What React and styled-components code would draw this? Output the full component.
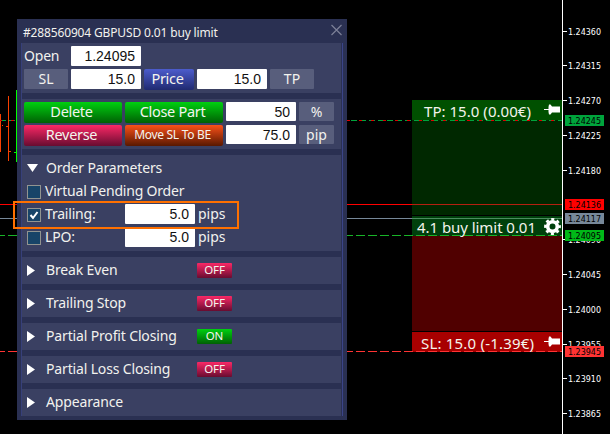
import React, { useState } from 'react';
import styled, { createGlobalStyle } from 'styled-components';

const GlobalStyle = createGlobalStyle`
  * {
    box-sizing: border-box;
  }

  body {
    margin: 0;
    background: #000;
    overflow: hidden;
  }

  button {
    border: 0;
    padding: 0;
  }
`;

const Terminal = styled.main`
  position: relative;
  width: 610px;
  height: 434px;
  overflow: hidden;
  background: #000;
  font-family: 'Noto Sans', 'Open Sans', sans-serif;
`;

const ChartCanvas = styled.svg`
  display: block;
  width: 610px;
  height: 434px;

  .zone-label {
    font-size: 15px;
    fill: #f4f4ec;
  }

  .price {
    font-family: 'DejaVu Sans Condensed', 'DejaVu Sans', sans-serif;
    font-size: 9.5px;
    fill: #fff;
  }

  .price.tag {
    fill: #000;
  }
`;

const OrderWindow = styled.section`
  position: absolute;
  left: 17px;
  top: 19px;
  width: 330px;
  height: 401px;
  background: #2a3052;
  color: #f2f2ee;
`;

const TitleBar = styled.header`
  height: 24px;
  display: flex;
  justify-content: space-between;
  padding: 5px 5px 0 6px;
  font-size: 12px;
  line-height: 18px;
  letter-spacing: -0.15px;
  white-space: nowrap;
`;

const WindowBody = styled.div`
  height: 373px;
  margin: 0 4px;
  padding-right: 1px;
  border-left: 1px solid #37407a;
  border-right: 1px solid #3a4488;
  display: flex;
  flex-direction: column;
  gap: 6px;
`;

const Block = styled.section`
  flex: none;
  height: ${({ $height }) => $height}px;
  padding: 3px 0 0 2px;
  background: #3a4062;
  display: flex;
  flex-direction: column;
  gap: ${({ $gap }) => $gap || 0}px;
`;

const Row = styled.div`
  height: 20px;
  display: flex;
  gap: 3px;
  align-items: flex-start;
`;

const OpenLabel = styled.span`
  width: 44px;
  font-size: 14px;
  line-height: 20px;
  letter-spacing: -0.2px;
`;

const NumberField = styled.input`
  flex: none;
  width: 70px;
  height: ${({ $height }) => $height || 20}px;
  padding: 0 6px 0 0;
  border: 0;
  border-radius: 1px;
  background: #fff;
  color: #111;
  font-family: 'Liberation Sans', sans-serif;
  font-size: 14px;
  text-align: right;
`;

const UnitTag = styled.span`
  width: ${({ $width }) => $width}px;
  height: ${({ $height }) => $height || 20}px;
  border-radius: 1px;
  background: #585e7c;
  font-size: 14px;
  line-height: 20px;
  text-align: center;
`;

const fills = {
  green: 'linear-gradient(#00d010, #006004)',
  pink: 'linear-gradient(#fa2866, #680c30)',
  orange: 'linear-gradient(#fa5018, #581800)',
  blue: 'linear-gradient(#4c5ccc, #202a70)',
};

const ActionButton = styled.button`
  flex: none;
  width: ${({ $width }) => $width}px;
  height: 21px;
  padding: 0 3px 2px 0;
  border-radius: 2px;
  background: ${({ $tone }) => fills[$tone]};
  color: #f4f4ee;
  font-family: inherit;
  font-size: ${({ $size }) => $size || 14.5}px;
  line-height: 19px;
  letter-spacing: -0.3px;
  white-space: nowrap;
`;

const SectionTitle = styled.h2`
  height: 20px;
  margin: 0;
  display: flex;
  align-items: center;
  font-size: 14px;
  font-weight: 400;
  letter-spacing: -0.15px;
  white-space: nowrap;

  svg {
    flex: none;
    width: 11px;
    margin: 0 8px 0 3px;
  }

  span {
    width: 151px;
    padding-bottom: 2px;
  }
`;

const OptionRow = styled.label`
  height: 20px;
  display: flex;
  align-items: center;
  font-size: 14px;
  white-space: nowrap;

  .name {
    width: 84px;
    padding: 0 0 2px 4px;
    letter-spacing: -0.2px;
  }

  .unit {
    padding: 0 0 2px 3px;
  }
`;

const CheckBox = styled.span`
  flex: none;
  width: 14px;
  height: 14px;
  margin: 2px 0 0 3px;
  border: 1px solid #929490;
  background: #184468;
  display: flex;
`;

const Toggle = styled.button`
  width: 35px;
  height: 15px;
  padding-bottom: 1px;
  border-radius: 1px;
  background: ${({ $on }) => (fills[$on ? 'green' : 'pink'])};
  color: #f4f4ee;
  font-family: inherit;
  font-size: 11.5px;
  line-height: 14px;
  letter-spacing: -0.2px;
`;

const Highlight = styled.div`
  position: absolute;
  left: 13px;
  top: 201px;
  width: 226px;
  height: 28px;
  border: 2px solid #ff7000;
  pointer-events: none;
`;

const prices = [
  ['1.24360', 31], ['1.24315', 65], ['1.24270', 100], ['1.24225', 135],
  ['1.24180', 170], ['1.24090', 239], ['1.24045', 274], ['1.24000', 309],
  ['1.23955', 344], ['1.23910', 378], ['1.23865', 413],
];

const tags = [
  ['1.24245', 120, '#00a43c'],
  ['1.24136', 204, '#ff0000'],
  ['1.24117', 218, '#778899'],
  ['1.24095', 235, '#00b818'],
  ['1.23945', 351, '#ff3333'],
];

function PushPin({ y }) {
  return (
    <path
      transform={`translate(544 ${y})`}
      fill='#fff'
      d='M0 -0.5H4.5V-2.5L5 -5H6.5L8 -3H16V3H8L6.5 5H5L4.5 2.5V0.5H0z'
    />
  );
}

function Chart() {
  return (
    <ChartCanvas viewBox='0 0 610 434' shapeRendering='crispEdges'>
      <path d='M0.5 114v38M8.5 96v65M2 125.5h1M6 126.5h3M8 151.5h3' stroke='#f84000' />
      <path d='M16.5 90v72M14 152.5h3' stroke='#00ff00' />

      <rect x='412' y='100' width='150' height='20' fill='#005000' />
      <rect x='412' y='120' width='150' height='95' fill='#002800' />
      <rect x='412' y='216' width='150' height='20' fill='#00400c' />
      <rect x='412' y='236' width='150' height='95' fill='#500000' />
      <rect x='412' y='332' width='150' height='20' fill='#a80000' />

      <path d='M0 120.5h562' stroke='#00a43c' strokeDasharray='6 3' />
      <path d='M0 120.5h562' stroke='#e00000' strokeDasharray='3 9' strokeDashoffset='-11' />
      <path d='M0 204.5h412' stroke='#ff0000' />
      <path d='M412 204.5h150' stroke='#b42010' />
      <path d='M0 218.5h412' stroke='#778899' />
      <path d='M412 218.5h150' stroke='#4c8c60' />
      <path d='M0 235.5h562' stroke='#18b428' strokeDasharray='9 3' strokeDashoffset='-8' />
      <path d='M0 351.5h562' stroke='#ff3333' strokeDasharray='9 3' strokeDashoffset='-8' />

      <g shapeRendering='auto'>
        <text className='zone-label' x='424' y='116.5' textLength='107'>TP: 15.0 (0.00€)</text>
        <text className='zone-label' x='417' y='232.5' textLength='119'>4.1 buy limit 0.01</text>
        <text className='zone-label' x='421' y='348.5' textLength='113'>SL: 15.0 (-1.39€)</text>
        <PushPin y={109.5} />
        <PushPin y={341.5} />
        <circle cx='552.5' cy='226.5' r='4.8' fill='none' stroke='#fff' strokeWidth='3.6' />
        <circle cx='552.5' cy='226.5' r='7.2' fill='none' stroke='#fff' strokeWidth='2.4' strokeDasharray='3.1 2.555' strokeDashoffset='1.55' />
      </g>

      <path d='M562.5 0v434' stroke='#fff' />
      {prices.map(([price, y]) => (
        <g key={price}>
          <path d={`M563 ${y}.5h4`} stroke='#fff' />
          <text className='price' x='568' y={y + 4} textLength='33' lengthAdjust='spacingAndGlyphs'>{price}</text>
        </g>
      ))}
      {tags.map(([price, y, color]) => (
        <g key={price}>
          <rect x='565' y={y - 5} width='39' height='11' fill={color} />
          <text className='price tag' x='568' y={y + 4} textLength='33' lengthAdjust='spacingAndGlyphs'>{price}</text>
        </g>
      ))}
    </ChartCanvas>
  );
}

function Arrow({ open }) {
  return (
    <svg width='11' height='12' viewBox='0 0 11 12'>
      <path d={open ? 'M0 2h11L5.5 10z' : 'M0 1L8 6.5 0 12z'} fill='#fff' />
    </svg>
  );
}

function Option({ name, checked, value, onToggle }) {
  return (
    <OptionRow onClick={onToggle}>
      <CheckBox>
        {checked && (
          <svg width='12' height='12' viewBox='0 0 12 12'>
            <path d='M2.5 6l2.5 3L9.5 3' fill='none' stroke='#fff' strokeWidth='2' />
          </svg>
        )}
      </CheckBox>
      <span className='name'>{name}</span>
      {value && (
        <>
          <NumberField defaultValue={value} />
          <span className='unit'>pips</span>
        </>
      )}
    </OptionRow>
  );
}

function Collapsed({ title, initial }) {
  const [on, setOn] = useState(initial);

  return (
    <Block $height={27}>
      <SectionTitle>
        <Arrow />
        <span>{title}</span>
        {on !== undefined &&
          <Toggle $on={on} onClick={() => setOn(!on)}>{on ? 'ON' : 'OFF'}</Toggle>
        }
      </SectionTitle>
    </Block>
  );
}

function App() {
  const [trailing, setTrailing] = useState(true);

  return (
    <Terminal>
      <GlobalStyle />
      <Chart />
      <OrderWindow>
        <TitleBar>
          #288560904 GBPUSD 0.01 buy limit
          <svg width='11' height='12' viewBox='0 0 11 12'>
            <path d='M0.5 1l10 10M10.5 1l-10 10' stroke='#7c8098' strokeWidth='1.2' />
          </svg>
        </TitleBar>
        <WindowBody>
          <Block $height={50} $gap={3}>
            <Row>
              <OpenLabel>Open</OpenLabel>
              <NumberField defaultValue='1.24095' />
            </Row>
            <Row>
              <UnitTag $width={44}>SL</UnitTag>
              <NumberField defaultValue='15.0' />
              <ActionButton $tone='blue' $width={50}>Price</ActionButton>
              <NumberField defaultValue='15.0' />
              <UnitTag $width={44}>TP</UnitTag>
            </Row>
          </Block>
          <Block $height={50} $gap={3}>
            <Row>
              <ActionButton $tone='green' $width={98}>Delete</ActionButton>
              <ActionButton $tone='green' $width={98}>Close Part</ActionButton>
              <NumberField $height={19} defaultValue='50' />
              <UnitTag $width={35} $height={19}>%</UnitTag>
            </Row>
            <Row>
              <ActionButton $tone='pink' $width={98}>Reverse</ActionButton>
              <ActionButton $tone='orange' $width={98} $size={12}>Move SL To BE</ActionButton>
              <NumberField $height={19} defaultValue='75.0' />
              <UnitTag $width={35} $height={19}>pip</UnitTag>
            </Row>
          </Block>
          <Block $height={96} $gap={3}>
            <SectionTitle>
              <Arrow open />
              <span>Order Parameters</span>
            </SectionTitle>
            <Option name='Virtual Pending Order' />
            <Option
              name='Trailing:'
              value='5.0'
              checked={trailing}
              onToggle={() => setTrailing(!trailing)}
            />
            <Option name='LPO:' value='5.0' />
          </Block>
          <Collapsed title='Break Even' initial={false} />
          <Collapsed title='Trailing Stop' initial={false} />
          <Collapsed title='Partial Profit Closing' initial />
          <Collapsed title='Partial Loss Closing' initial={false} />
          <Collapsed title='Appearance' />
        </WindowBody>
      </OrderWindow>
      <Highlight />
    </Terminal>
  );
}

export default App;
